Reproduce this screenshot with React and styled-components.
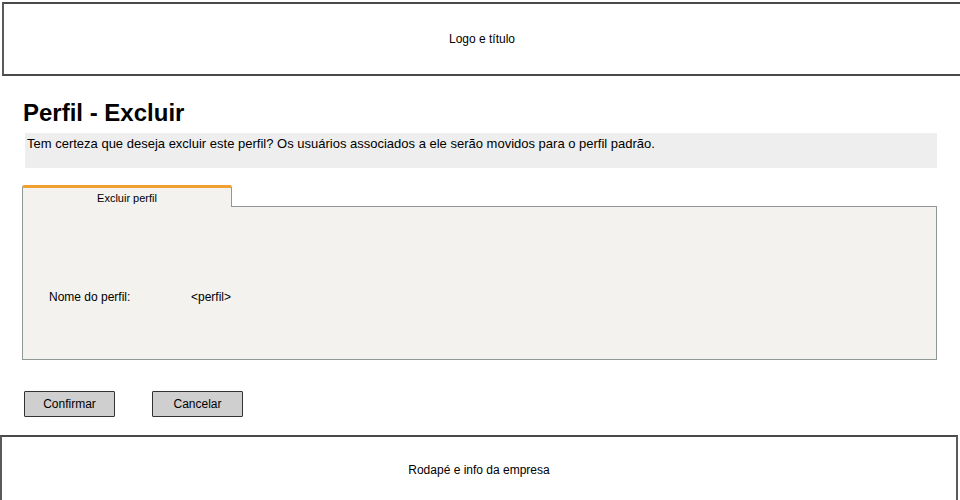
import React from "react";
import styled, { createGlobalStyle } from "styled-components";

const Global = createGlobalStyle`
  html, body { margin: 0; padding: 0; overflow: hidden; background: #ffffff; }
  body { font-family: "Liberation Sans", Arial, sans-serif; color: #000; }
`;

const Page = styled.div`
  width: 960px;
  height: 500px;
  overflow: hidden;
  display: flex;
  flex-direction: column;
  & > * { flex-shrink: 0; }
`;

const Header = styled.header`
  box-sizing: border-box;
  margin: 2px 0 0 2px;
  width: 972px;
  height: 74px;
  padding-right: 14px;
  border-top: 2px solid #4a4a4a;
  border-bottom: 2px solid #4a4a4a;
  border-left: 2px solid #5a5a5a;
  display: flex;
  align-items: center;
  justify-content: center;
  font-size: 12px;
`;

const Title = styled.h1`
  margin: 23px 0 0 23px;
  font-size: 24px;
  line-height: 28px;
  font-weight: bold;
`;

const Notice = styled.div`
  box-sizing: border-box;
  margin: 6px 0 0 25px;
  width: 912px;
  height: 35px;
  padding: 3px 2px;
  background: #eeeeee;
  font-size: 13px;
  line-height: 16px;
`;

const TabStrip = styled.div`
  display: flex;
  margin: 17px 0 0 22px;
  width: 915px;
  height: 22px;
`;

const Tab = styled.div`
  box-sizing: border-box;
  width: 210px;
  height: 22px;
  background: #f3f2ee;
  border-top: 3px solid #f0a030;
  border-left: 1px solid #8f9896;
  border-right: 1px solid #8f9896;
  border-radius: 2px 2px 0 0;
  display: flex;
  align-items: center;
  justify-content: center;
  font-size: 11px;
`;

const TabFill = styled.div`
  flex: 1;
  box-sizing: border-box;
  border-bottom: 1px solid #8f9896;
`;

const Panel = styled.section`
  box-sizing: border-box;
  margin-left: 22px;
  width: 915px;
  height: 153px;
  background: #f3f2ee;
  border: 1px solid #8f9896;
  border-top: none;
  padding: 82px 0 0 26px;
`;

const FieldRow = styled.div`
  display: flex;
  font-size: 12px;
  line-height: 16px;
`;

const FieldLabel = styled.span`
  width: 142px;
`;

const FieldValue = styled.span``;

const Actions = styled.div`
  display: flex;
  gap: 37px;
  margin: 31px 0 0 24px;
`;

const Button = styled.button`
  box-sizing: border-box;
  width: 91px;
  height: 26px;
  background: #cfcfcf;
  border: 1.5px solid #333;
  border-radius: 1px;
  font-family: "Liberation Sans", Arial, sans-serif;
  font-size: 12px;
  color: #000;
  padding: 0;
`;

const Footer = styled.footer`
  box-sizing: border-box;
  margin-top: 18px;
  width: 958px;
  height: 80px;
  border-top: 2px solid #4a4a4a;
  border-left: 2px solid #5a5a5a;
  border-right: 2px solid #5a5a5a;
  padding-top: 25px;
  text-align: center;
  font-size: 12px;
  line-height: 16px;
`;

export default function App() {
  return (
    <>
      <Global />
      <Page>
        <Header>Logo e título</Header>
        <Title>Perfil - Excluir</Title>
        <Notice>
          Tem certeza que deseja excluir este perfil? Os usuários associados a ele serão movidos para o perfil padrão.
        </Notice>
        <TabStrip>
          <Tab>Excluir perfil</Tab>
          <TabFill />
        </TabStrip>
        <Panel>
          <FieldRow>
            <FieldLabel>Nome do perfil:</FieldLabel>
            <FieldValue>&lt;perfil&gt;</FieldValue>
          </FieldRow>
        </Panel>
        <Actions>
          <Button>Confirmar</Button>
          <Button>Cancelar</Button>
        </Actions>
        <Footer>Rodapé e info da empresa</Footer>
      </Page>
    </>
  );
}
